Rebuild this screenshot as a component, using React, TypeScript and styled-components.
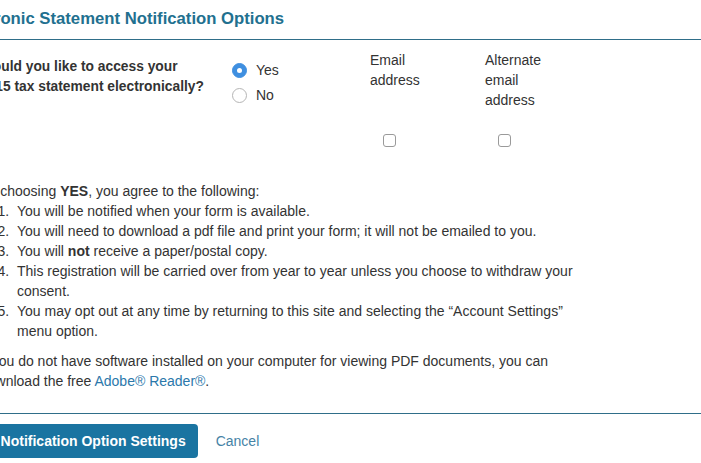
import React from "react";
import styled, { createGlobalStyle } from "styled-components";

const Global = createGlobalStyle`
  html, body { margin: 0; padding: 0; background: #fff; overflow: hidden; }
  body { font-family: "Liberation Sans", Arial, Helvetica, sans-serif; color: #333; font-size: 14px; }
`;

const Page = styled.div`
  width: 760px;
  margin-left: -46px;
`;

const Header = styled.div`
  padding-top: 9px;
  box-sizing: border-box;
  height: 40px;
  border-bottom: 1px solid #2f6e89;
`;

const Title = styled.h2`
  margin: 0;
  font-size: 16.7px;
  line-height: 20px;
  font-weight: bold;
  color: #22708f;
`;

const Body = styled.div`
  padding-left: 26px;
  width: 610px;
  padding-top: 10px;
`;

const ChoiceGrid = styled.div`
  display: grid;
  grid-template-columns: 252px 138px 115px 80px;
  line-height: 20px;
`;

const Question = styled.div`
  font-weight: bold;
  font-size: 13.8px;
  padding-top: 7px;
  color: #333;
`;

const RadioList = styled.div`
  display: flex;
  flex-direction: column;
  gap: 5px;
  padding-top: 10px;
`;

const RadioRow = styled.label`
  display: flex;
  align-items: center;
  gap: 9px;
  font-size: 14px;
  color: #333;
`;

const RadioDot = styled.span<{ $checked?: boolean }>`
  width: 15px;
  height: 15px;
  border-radius: 50%;
  box-sizing: border-box;
  display: inline-flex;
  align-items: center;
  justify-content: center;
  background: ${(p) => (p.$checked ? "#3f8fe0" : "#fff")};
  border: 1px solid ${(p) => (p.$checked ? "#3f8fe0" : "#b5b5b5")};
  &::after {
    content: "";
    width: 5px;
    height: 5px;
    border-radius: 50%;
    background: ${(p) => (p.$checked ? "#fff" : "transparent")};
  }
`;

const ColumnHead = styled.div`
  display: flex;
  flex-direction: column;
  font-size: 14px;
  color: #333;
`;

const CheckCell = styled.div<{ $col: number }>`
  grid-column: ${(p) => p.$col};
  padding: 24px 0 0 13px;
  height: 13px;
`;

const Check = styled.span`
  display: block;
  width: 13px;
  height: 13px;
  box-sizing: border-box;
  border: 1px solid #9a9a9a;
  border-radius: 3px;
  background: #fff;
`;

const Para = styled.p`
  margin: 0;
  line-height: 20px;
  font-size: 14px;
`;

const Agree = styled(Para)`
  margin-top: 34px;
`;

const List = styled.ol`
  margin: 0;
  padding-left: 37px;
  line-height: 20px;
  font-size: 14px;
  li::marker {
    content: counter(list-item) ".  ";
  }
`;

const Note = styled(Para)`
  margin-top: 10px;
`;

const Link = styled.a`
  color: #2b78ab;
  text-decoration: none;
`;

const Footer = styled.div`
  margin-top: 22px;
  border-top: 1px solid #2f6e89;
  width: 800px;
  padding-top: 10px;
  display: flex;
  align-items: center;
  gap: 18px;
`;

const PrimaryButton = styled.button`
  font-family: "Liberation Sans", Arial, sans-serif;
  font-weight: bold;
  font-size: 14px;
  color: #fff;
  background: #1a74a1;
  border: none;
  border-radius: 4px;
  height: 34px;
  padding: 0 12px;
  margin-left: -2px;
`;

const CancelLink = styled.a`
  color: #4683a6;
  font-size: 14px;
  text-decoration: none;
`;

export default function App() {
  return (
    <>
      <Global />
      <Page>
        <Header>
          <Title>Electronic Statement Notification Options</Title>
        </Header>
        <Body>
          <ChoiceGrid>
            <Question>
              Would you like to access your
              <br />
              2015 tax statement electronically?
            </Question>
            <RadioList>
              <RadioRow>
                <RadioDot $checked />
                Yes
              </RadioRow>
              <RadioRow>
                <RadioDot />
                No
              </RadioRow>
            </RadioList>
            <ColumnHead>
              <span>Email</span>
              <span>address</span>
            </ColumnHead>
            <ColumnHead>
              <span>Alternate</span>
              <span>email</span>
              <span>address</span>
            </ColumnHead>
            <CheckCell $col={3}>
              <Check />
            </CheckCell>
            <CheckCell $col={4}>
              <Check />
            </CheckCell>
          </ChoiceGrid>
          <Agree>
            By choosing <b>YES</b>, you agree to the following:
          </Agree>
          <List>
            <li>You will be notified when your form is available.</li>
            <li>You will need to download a pdf file and print your form; it will not be emailed to you.</li>
            <li>
              You will <b>not</b> receive a paper/postal copy.
            </li>
            <li>This registration will be carried over from year to year unless you choose to withdraw your consent.</li>
            <li>You may opt out at any time by returning to this site and selecting the “Account Settings” menu option.</li>
          </List>
          <Note>
            If you do not have software installed on your computer for viewing PDF documents, you can download the free{" "}
            <Link>Adobe® Reader®</Link>.
          </Note>
        </Body>
        <Footer>
          <PrimaryButton>Save Notification Option Settings</PrimaryButton>
          <CancelLink>Cancel</CancelLink>
        </Footer>
      </Page>
    </>
  );
}
